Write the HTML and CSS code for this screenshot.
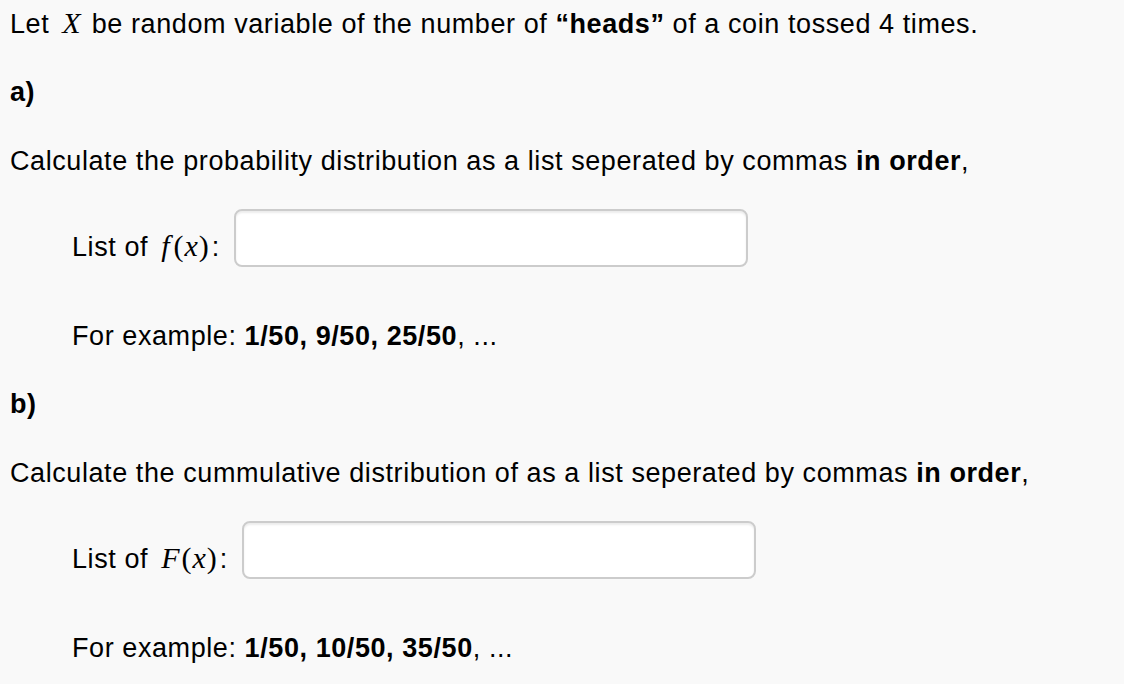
FILE: index.html
```html
<!DOCTYPE html>
<html>
<head>
<meta charset="utf-8">
<link rel="stylesheet" href="styles.css">
</head>
<body>
<div class="page">
  <p class="intro">Let <span class="math"><i>X</i></span> be random variable of the number of <b>“heads”</b> of a coin tossed 4 times.</p>

  <h3 class="part">a)</h3>
  <p class="prompt">Calculate the probability distribution as a list seperated by commas <b>in order</b>,</p>
  <div class="answer-row">
    <label class="label">List of <span class="math"><i class="fn">f</i><span class="paren">(</span><i>x</i><span class="paren">)</span></span>:</label>
    <input class="answer" type="text">
  </div>
  <p class="example">For example: <b>1/50, 9/50, 25/50</b>, ...</p>

  <h3 class="part">b)</h3>
  <p class="prompt">Calculate the cummulative distribution of as a list seperated by commas <b>in order</b>,</p>
  <div class="answer-row">
    <label class="label">List of <span class="math"><i class="fn-cap">F</i><span class="paren">(</span><i>x</i><span class="paren">)</span></span>:</label>
    <input class="answer" type="text">
  </div>
  <p class="example">For example: <b>1/50, 10/50, 35/50</b>, ...</p>
</div>
</body>
</html>
```

FILE: styles.css
```css
html, body {
  margin: 0;
  padding: 0;
  background: #f9f9f9;
}

.page {
  padding: 6px 0 0 10px;
  font-family: "Liberation Sans", Arial, Helvetica, sans-serif;
  font-size: 27px;
  letter-spacing: 0.58px;
  line-height: 36px;
  color: #000;
}

p, h3 {
  margin: 0;
}

b {
  font-weight: bold;
}

.math {
  font-family: "Liberation Serif", "Times New Roman", serif;
  font-size: 30px;
  line-height: 0;
  letter-spacing: 0;
  margin: 0 3px 0 5px;
}

.label .math {
  margin-right: 2px;
}

.math i {
  font-style: italic;
}

.fn {
  margin-right: 3px;
}

.fn-cap {
  margin-right: 1px;
}

.paren {
  margin: 0 1px;
}

.part {
  font-size: 27px;
  font-weight: bold;
  margin-top: 32px;
}

.prompt {
  margin-top: 33px;
}

.answer-row {
  display: flex;
  align-items: flex-end;
  margin-top: 30px;
  padding-left: 62px;
}

.label {
  margin-bottom: 2px;
  margin-right: 14px;
}

.answer {
  box-sizing: border-box;
  width: 514px;
  height: 58px;
  margin: 0;
  border: 2px solid #cccccc;
  border-radius: 8px;
  background: #fff;
  box-shadow: inset 0 2px 2px rgba(0, 0, 0, 0.075);
  font: inherit;
  padding: 0 12px;
}

.example {
  margin-top: 51px;
  padding-left: 62px;
}
```
